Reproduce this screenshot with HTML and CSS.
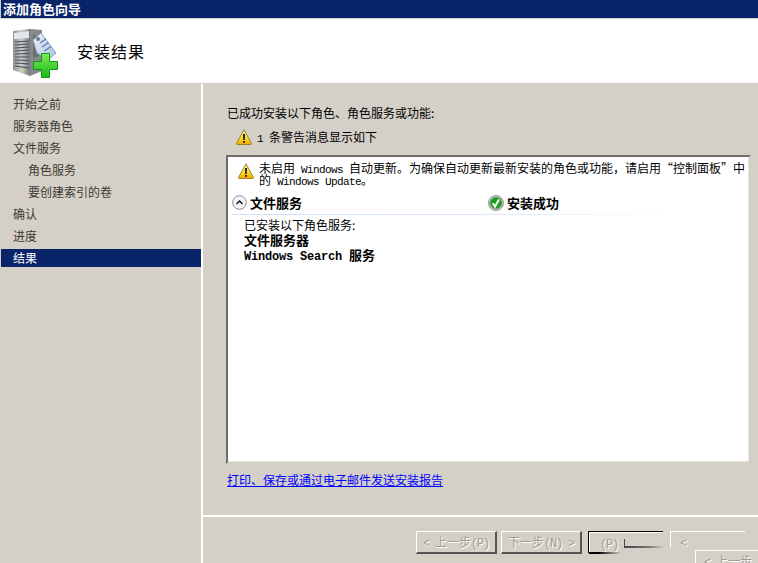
FILE: index.html
```html
<!DOCTYPE html>
<html lang="zh-CN">
<head>
<meta charset="utf-8">
<title>添加角色向导</title>
<link rel="stylesheet" href="styles.css">
</head>
<body>
<svg class="defs" width="0" height="0" aria-hidden="true">
  <defs>
    <linearGradient id="warnFill" x1="0" y1="0" x2="0" y2="1">
      <stop offset="0" stop-color="#fff6a8"/><stop offset="0.6" stop-color="#fbd72e"/><stop offset="1" stop-color="#f0a800"/>
    </linearGradient>
    <symbol id="warn" viewBox="0 0 16 16">
      <path d="M8 .8 15.6 14.6Q15.6 15.5 14.7 15.5H1.3Q.4 15.5.4 14.6Z" fill="url(#warnFill)" stroke="#8a6d10" stroke-width=".8" stroke-linejoin="round"/>
      <path d="M7 5h2l-.3 6H7.3Z" fill="#111"/><rect x="7.1" y="12" width="1.8" height="1.8" fill="#111"/>
    </symbol>
  </defs>
</svg>
<div class="window">
  <div class="titlebar">添加角色向导</div>
  <header class="banner">
    <svg class="banner-icon" width="46" height="50" viewBox="0 0 46 50" aria-hidden="true">
      <defs>
        <linearGradient id="front" x1="0" y1="0" x2="1" y2="0"><stop offset="0" stop-color="#8d9296"/><stop offset=".5" stop-color="#c9cdd0"/><stop offset="1" stop-color="#74787c"/></linearGradient>
        <linearGradient id="tag" x1="0" y1="0" x2="1" y2="1"><stop offset="0" stop-color="#eef3fa"/><stop offset="1" stop-color="#a9c0dc"/></linearGradient>
        <linearGradient id="plus" x1="0" y1="0" x2="0" y2="1"><stop offset="0" stop-color="#7dee55"/><stop offset="1" stop-color="#18b818"/></linearGradient>
      </defs>
      <path d="M1 2 18 0V47L1 41Z" fill="url(#front)"/>
      <path d="M18 0 30 1V42L18 47Z" fill="#85898c"/>
      <path d="M2 4 17 2V9L2 10Z" fill="#e4e6e8"/>
      <path d="M3 13 17 12M3 16 17 15M3 19 17 18M3 22 17 21M3 25 17 24.500M3 28 17 28M3 31 17 31.500M3 34 17 35M3 37 17 39" stroke="#4a4e52" stroke-width="1.200"/>
      <path d="M21 6 27 7V27L21 29Z" fill="#6b6f72"/>
      <rect x="9" y="40" width="2" height="2" fill="#c6e83a"/>
      <path d="M21 11 29 4 44 24 36 31 25 24Z" fill="url(#tag)" stroke="#8ba0ba"/>
      <circle cx="26" cy="10" r="2" fill="#6c7c90"/>
      <path d="M28 14 34 10M30 18 36.500 13.500M32.500 22 39 17.500" stroke="#5b79b8" stroke-width="1.300"/>
      <path d="M29.500 24.500H37.500V32.500H45.500V40.500H37.500V48.500H29.500V40.500H21.500V32.500H29.500Z" fill="url(#plus)" stroke="#0e9a12"/>
    </svg>
    <h1 class="banner-title">安装结果</h1>
  </header>
  <div class="body">
    <nav class="steps">
      <div class="step">开始之前</div>
      <div class="step">服务器角色</div>
      <div class="step">文件服务</div>
      <div class="step sub">角色服务</div>
      <div class="step sub">要创建索引的卷</div>
      <div class="step">确认</div>
      <div class="step">进度</div>
      <div class="step current">结果</div>
    </nav>
    <main class="content">
      <div class="pane">
        <p class="intro">已成功安装以下角色、角色服务或功能:</p>
        <div class="summary">
          <svg class="ico16" aria-hidden="true"><use href="#warn"/></svg>
          <span><span class="lat">1 </span>条警告消息显示如下</span>
        </div>
        <section class="results">
          <div class="notice">
            <svg class="ico16" aria-hidden="true"><use href="#warn"/></svg>
            <p>未启用<span class="lat"> Windows </span>自动更新。为确保自动更新最新安装的角色或功能，请启用“控制面板”中的<span class="lat"> Windows Update</span>。</p>
          </div>
          <div class="result-head">
            <div class="result-name">
              <svg class="ico14" viewBox="0 0 15 15" aria-hidden="true">
                <circle cx="7.500" cy="7.500" r="6.800" fill="#f4f4f4" stroke="#8c8c8c"/>
                <path d="M4.500 9 7.500 6 10.500 9" fill="none" stroke="#111" stroke-width="1.400"/>
              </svg>
              <strong>文件服务</strong>
            </div>
            <div class="result-state">
              <svg class="ico16" viewBox="0 0 16 16" aria-hidden="true">
                <circle cx="8" cy="8" r="7.500" fill="#b9bdb9" stroke="#858985" stroke-width=".8"/>
                <circle cx="8" cy="8" r="5.800" fill="#1f9a1f"/>
                <path d="M4.800 8.200 7 11.500 11 4.500" fill="none" stroke="#fff" stroke-width="2"/>
              </svg>
              <strong>安装成功</strong>
            </div>
          </div>
          <div class="result-body">
            <div class="line">已安装以下角色服务:</div>
            <div class="line role">文件服务器</div>
            <div class="line role"><span class="lat">Windows Search </span>服务</div>
          </div>
        </section>
        <a class="report" href="#">打印、保存或通过电子邮件发送安装报告</a>
      </div>
      <footer class="actions">
        <button class="btn" disabled><span class="lat">&lt; </span>上一步<span class="lat">(P)</span></button>
        <button class="btn" disabled>下一步<span class="lat">(N) &gt;</span></button>
        <div class="ghost ghost-a"><span class="lat">(P)</span><span class="ghost-line"></span></div>
        <div class="ghost ghost-b"><span class="lat">&lt;</span></div>
        <div class="ghost ghost-c"><span class="lat">&lt; </span>上一步</div>
      </footer>
    </main>
  </div>
</div>
</body>
</html>
```
FILE: styles.css
```css
* { box-sizing: border-box; }
html, body { margin: 0; height: 100%; overflow: hidden; }
body {
  background: #d4d0c8;
  color: #000;
  font: 12px/16px "Noto Sans CJK SC", "Liberation Sans", sans-serif;
}
.defs { display: block; height: 0; }
.lat {
  font-family: "Liberation Mono", monospace;
  font-size: 11px;
  letter-spacing: -0.6px;
  line-height: 0;
  white-space: pre;
}
p, h1 { margin: 0; }

.window { display: flex; flex-direction: column; height: 563px; padding-left: 1px; }
.titlebar {
  height: 18px;
  background: #0a246a;
  color: #fff;
  font-size: 13px;
  font-weight: 700;
  line-height: 18px;
  padding-left: 2px;
}
.banner {
  height: 65px;
  margin: 1px 0 0 -1px;
  background: #fff;
  display: flex;
  align-items: center;
  border-bottom: 1px solid #d4d0c8;
  padding: 0 0 0 12px;
}
.banner-icon { flex: none; margin-top: 6px; }
.banner-title { margin-left: 19px; font-size: 16px; font-weight: 400; letter-spacing: 1px; line-height: 20px; }

.body { flex: 1; display: flex; min-height: 0; }
.steps {
  width: 200px;
  flex: none;
  padding-top: 11px;
  display: flex;
  flex-direction: column;
  gap: 4px;
}
.step { height: 18px; line-height: 18px; padding-left: 12px; color: #3c3a32; }
.step.sub { padding-left: 27px; }
.step.current { background: #0a246a; color: #fff; }

.content {
  flex: 1;
  min-width: 0;
  border-left: 2px solid #fff;
  display: flex;
  flex-direction: column;
}
.pane { flex: 1; min-height: 0; padding: 21px 7px 0 24px; display: flex; flex-direction: column; border-bottom: 2px solid #fff; }
.intro { height: 16px; }
.summary { display: flex; align-items: center; gap: 5px; height: 16px; margin: 8px 0 0 9px; }
.ico16 { width: 16px; height: 16px; flex: none; display: block; }
.ico14 { width: 15px; height: 15px; flex: none; display: block; }

.results {
  height: 309px;
  margin: 10px 0 0 -1px;
  background: #fff;
  border-style: solid;
  border-width: 2px;
  border-color: #6f6d68 #d4d0c8 #d4d0c8 #6f6d68;
  box-shadow: inset -1px -1px 0 #e8e6e1;
  padding: 5px 2px 0 4px;
}
.notice { display: flex; gap: 5px; padding-left: 6px; }
.notice .ico16 { margin-top: 1px; }
.notice p { line-height: 12px; font-size: 12px; }
.result-head {
  display: flex;
  align-items: center;
  height: 24px;
  margin-top: 5px;
  margin-right: 68px;
  font-size: 13px;
  border-bottom: 1px solid transparent;
  border-image: linear-gradient(to right, #cfe0f8, #e0ecfb 60%, #fff) 1;
}
.result-name { display: flex; align-items: center; gap: 3px; width: 256px; flex: none; }
.result-state { display: flex; align-items: center; gap: 3px; }
.result-name strong, .result-state strong { font-weight: 700; }
.result-body { padding: 2px 0 0 12px; }
.line { height: 15px; line-height: 15px; }
.role { font-weight: 700; font-size: 13px; }
.role .lat { font-size: 12px; letter-spacing: -0.2px; }

.report { margin-top: 8px; color: #00f; text-decoration: underline; height: 16px; line-height: 16px; }

.actions {
  flex: none;
  height: 46px;
  position: relative;
  display: flex;
  align-items: flex-start;
  gap: 4px;
  padding: 14px 0 0 213px;
}
.btn {
  width: 81px;
  height: 23px;
  padding: 0;
  background: #d4d0c8;
  border-style: solid;
  border-width: 1px 2px 2px 1px;
  border-color: #fff #555 #555 #fff;
  color: #a09d95;
  text-shadow: 1px 1px 0 #fff;
  font: inherit;
  line-height: 18px;
  white-space: nowrap;
  overflow: hidden;
}
.btn .lat, .ghost .lat { font-size: 12px; letter-spacing: -1.2px; }
.ghost { position: absolute; color: #a09d95; text-shadow: 1px 1px 0 #fff; white-space: nowrap; }
.ghost-a {
  left: 385px; top: 14px; width: 75px; height: 22px;
  border-top: 1px solid #000; border-left: 1px solid #000;
  box-shadow: inset 1px 1px 0 #fff;
  padding: 3px 0 0 11px;
}
.ghost-a::after {
  content: "";
  position: absolute;
  left: 0; bottom: -1px; width: 32px; height: 2px;
  background: linear-gradient(to right, #000 30%, #d4d0c8);
}
.ghost-line {
  position: absolute;
  left: 35px; top: 7px; width: 40px; height: 9px;
  border-left: 1px solid #fff;
  border-bottom: 2px solid;
  border-image: linear-gradient(to right, #444, #777 60%, #d4d0c8) 1;
}
.ghost-b {
  left: 467px; top: 14px; width: 75px; height: 16px;
  border-top: 1px solid #fff; border-left: 1px solid #fff;
  padding: 2px 0 0 9px;
}
.ghost-c {
  left: 492px; top: 33px; width: 64px; height: 13px;
  border-top: 1px solid #fff; border-left: 1px solid #fff;
  padding: 2px 0 0 8px;
  overflow: hidden;
}
```
